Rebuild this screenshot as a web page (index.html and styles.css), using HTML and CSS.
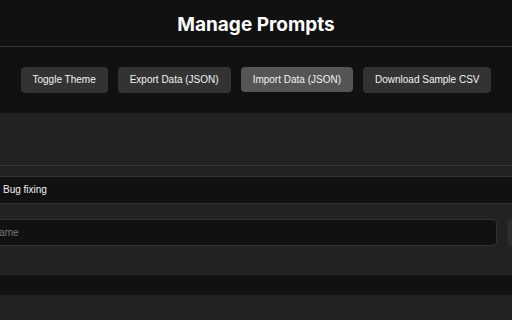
FILE: index.html
```html
<!DOCTYPE html>
<html lang="en">
<head>
<meta charset="utf-8">
<title>Manage Prompts</title>
<link rel="stylesheet" href="styles.css">
</head>
<body>
<header class="page-header">
  <h1 class="title">Manage Prompts</h1>
</header>
<div class="toolbar">
  <button class="btn">Toggle Theme</button>
  <button class="btn">Export Data (JSON)</button>
  <button class="btn btn-hover">Import Data (JSON)</button>
  <button class="btn">Download Sample CSV</button>
</div>
<section class="card">
  <div class="card-top"></div>
  <div class="card-sub"></div>
  <div class="list-row">Bug fixing</div>
  <div class="form-area">
    <div class="form-row">
      <input class="text-input" type="text" placeholder="Name">
      <button class="side-btn"></button>
    </div>
  </div>
</section>
<section class="card card-next"></section>
</body>
</html>
```
FILE: styles.css
```css
html, body {
  margin: 0;
  padding: 0;
  background: #111111;
  overflow: hidden;
  width: 512px;
  height: 320px;
}
body {
  font-family: "Liberation Sans", Arial, sans-serif;
  color: #eeeeee;
}
.page-header {
  border-bottom: 1px solid #333333;
  height: 47px;
  box-sizing: border-box;
  padding-top: 14px;
}
.title {
  margin: 0;
  font-family: Inter, "Noto Sans", sans-serif;
  font-weight: 700;
  font-size: 19px;
  line-height: 22px;
  text-align: center;
  color: #ffffff;
}
.toolbar {
  display: flex;
  justify-content: center;
  gap: 10px;
  margin-top: 20px;
}
.btn {
  height: 26px;
  padding: 0 12px;
  border: none;
  border-radius: 4px;
  background: #333333;
  color: #f2f2f2;
  font-family: "Liberation Sans", Arial, sans-serif;
  font-size: 10px;
  line-height: 26px;
}
.btn-hover {
  background: #555555;
  height: 25px;
  line-height: 25px;
}
.card {
  background: #222222;
  margin-top: 20px;
}
.card-top {
  height: 52px;
  border-bottom: 1px solid #383838;
}
.card-sub {
  height: 10px;
}
.list-row {
  background: #111111;
  border-top: 1px solid #333333;
  border-bottom: 1px solid #333333;
  height: 26px;
  line-height: 26px;
  padding-left: 3px;
  font-size: 10px;
  color: #f0f0f0;
}
.form-area {
  padding: 15px 0 29px;
}
.form-row {
  display: flex;
  gap: 11px;
  margin-left: -17px;
  width: 600px;
}
.text-input {
  flex: none;
  width: 514px;
  height: 27px;
  box-sizing: border-box;
  background: #111111;
  border: 1px solid #333333;
  border-radius: 4px;
  padding: 0 8px;
  font-family: "Liberation Sans", Arial, sans-serif;
  font-size: 10px;
  color: #eeeeee;
  outline: none;
}
.text-input::placeholder {
  color: #777777;
}
.side-btn {
  flex: none;
  width: 60px;
  height: 27px;
  background: #2c2c2c;
  border: 1px solid #333333;
  border-radius: 4px;
}
.card-next {
  height: 40px;
}
```
